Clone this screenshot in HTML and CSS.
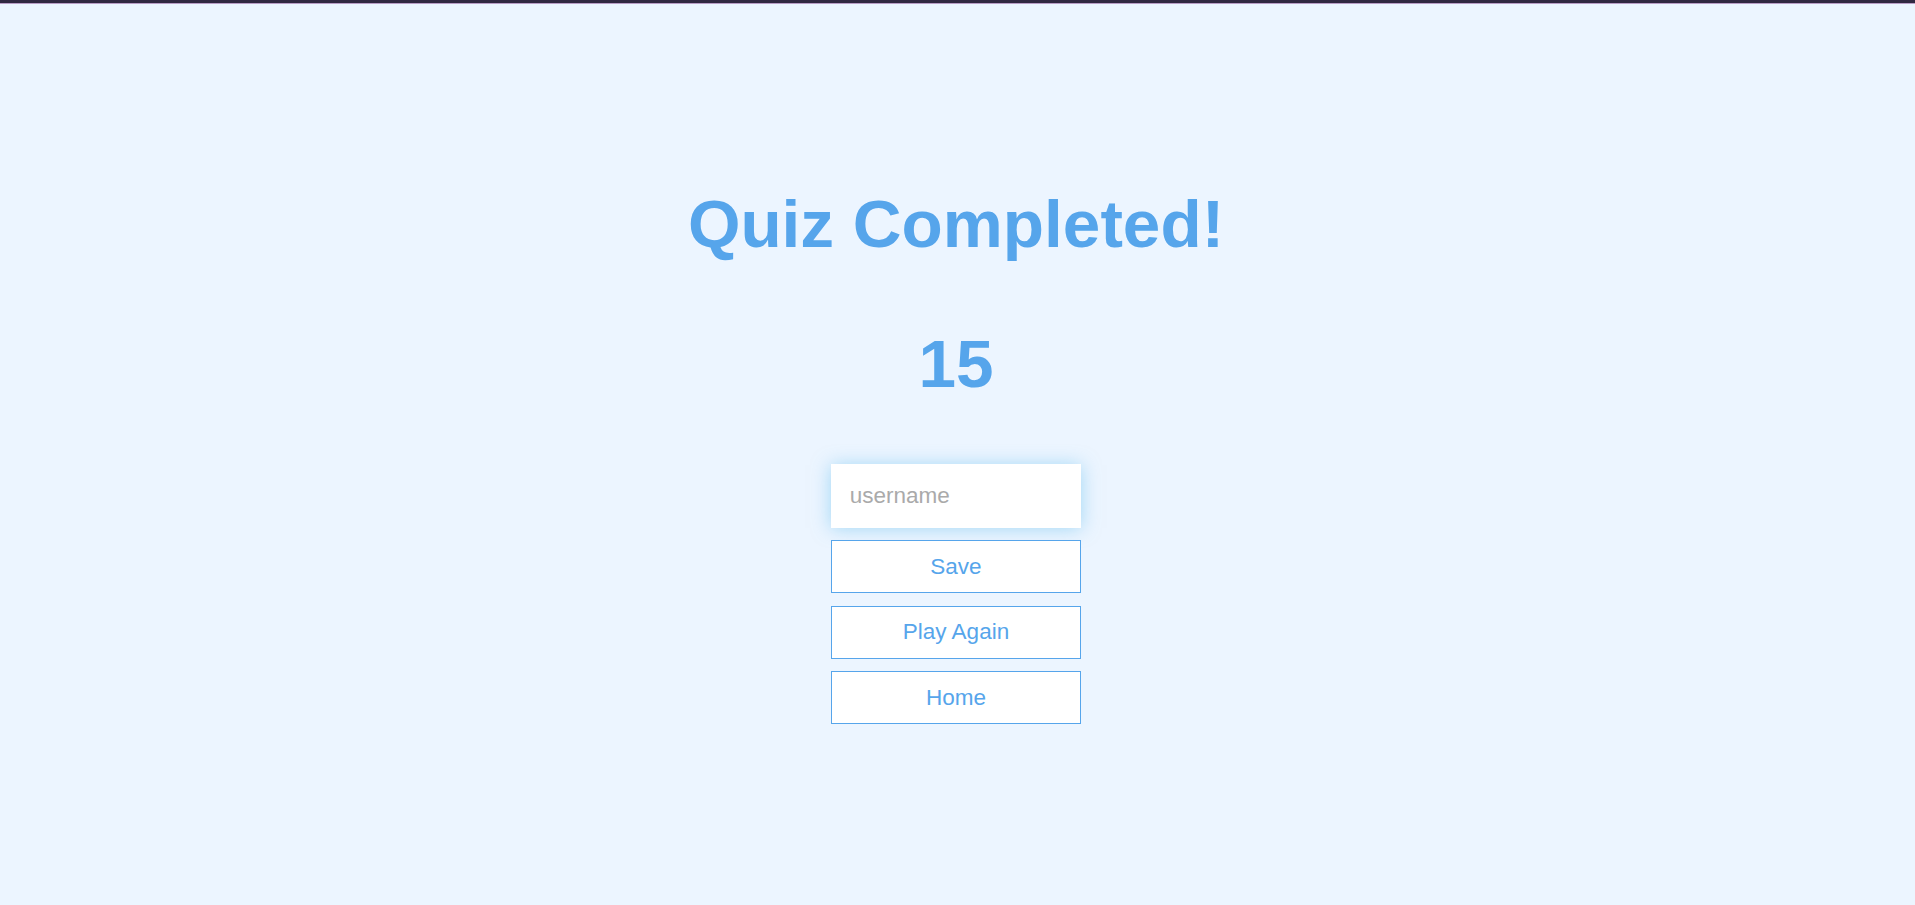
FILE: index.html
```html
<!DOCTYPE html>
<html lang="en">
<head>
<meta charset="utf-8">
<title>Quiz Completed</title>
<link rel="stylesheet" href="styles.css">
</head>
<body>
<div class="topbar"></div>
<main class="container">
  <div class="end">
    <h1 class="title">Quiz Completed!</h1>
    <h1 class="score">15</h1>
    <form class="save-form">
      <input type="text" class="username" placeholder="username">
      <button type="button" class="btn">Save</button>
    </form>
    <a class="btn" href="#">Play Again</a>
    <a class="btn" href="#">Home</a>
  </div>
</main>
</body>
</html>
```
FILE: styles.css
```css
html {
  font-size: 12.5px;
  background-color: #ecf5ff;
}
* {
  box-sizing: border-box;
  margin: 0;
  padding: 0;
  font-family: "Liberation Sans", Arial, Helvetica, sans-serif;
}
body {
  margin: 0;
  background-color: #ecf5ff;
  min-height: 100vh;
}
.topbar {
  height: 4px;
  background-color: #302841;
  border-bottom: 1px solid #b89dc6;
}
.container {
  padding-top: 181px;
  padding-right: 3px;
  display: flex;
  justify-content: center;
}
.end {
  display: flex;
  flex-direction: column;
  align-items: center;
}
h1 {
  font-size: 5.4rem;
  font-weight: 700;
  color: #56a5eb;
  margin-bottom: 5rem;
  line-height: normal;
}
.save-form {
  display: flex;
  flex-direction: column;
  align-items: center;
}
.username {
  width: 20rem;
  margin-bottom: 1rem;
  padding: 1.5rem;
  font-size: 1.8rem;
  border: none;
  outline: none;
  background: #fff;
  color: #333;
  box-shadow: 0 0.1rem 1.4rem 0 rgba(86, 185, 235, 0.5);
}
.username::placeholder {
  color: #aaa;
}
.btn {
  display: block;
  width: 20rem;
  padding: 1rem 0;
  margin-bottom: 1rem;
  font-size: 1.8rem;
  line-height: normal;
  text-align: center;
  text-decoration: none;
  color: #56a5eb;
  background-color: #fff;
  border: 0.1rem solid #56a5eb;
  cursor: pointer;
}
```
